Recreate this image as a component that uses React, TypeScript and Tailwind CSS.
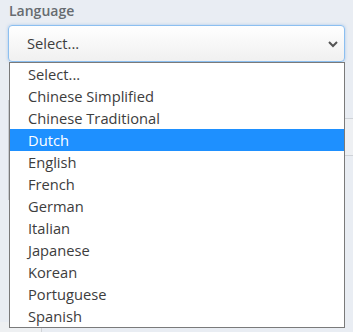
import React from "react";

const items = [
  "Select...",
  "Chinese Simplified",
  "Chinese Traditional",
  "Dutch",
  "English",
  "French",
  "German",
  "Italian",
  "Japanese",
  "Korean",
  "Portuguese",
  "Spanish",
];

export default function App() {
  return (
    <div className="relative w-[353px] h-[332px] overflow-hidden bg-[#e9edf3] font-['Open_Sans',sans-serif]">
      <div className="px-[9px] pt-[1px] text-[14px] font-semibold text-[#666b70] leading-[20px]">Language</div>
      <div className="mx-[8px] mt-[4px] h-[37px] rounded-[4px] border border-[#8cbff0] shadow-[0_0_3px_rgba(100,160,230,0.5)] bg-gradient-to-b from-white to-[#f0f0f0] flex items-center justify-between pl-[18px] pr-[5px]">
        <span className="text-[14.7px] text-[#3d3d3d]">Select...</span>
        <svg width="12" height="8" viewBox="0 0 12 8">
          <path d="M2 2 L6 6 L10 2" stroke="#555" strokeWidth="2" fill="none" />
        </svg>
      </div>
      {/* background hints */}
      <div className="absolute right-0 top-[118px] w-[10px] h-[38px] border-y border-[#cfd3d8] bg-[#eef0f3]" />
      <div className="absolute left-[8px] top-[100px] w-[1px] h-[100px] bg-[#c9ccd0]" />
      <div className="absolute left-0 bottom-0 w-[42px] h-[10px] border-r border-[#d0d3d7] bg-[#eef0f2]" />
      <div className="absolute left-[9px] top-[62px] w-[336px] border border-[#7a7a7a] bg-white z-10">
        {items.map((it) => (
          <div
            key={it}
            className={
              "h-[22px] pl-[18px] text-[14.7px] leading-[22px] " +
              (it === "Dutch" ? "bg-[#1e90ff] text-white" : "text-[#3d3d3d]")
            }
          >
            {it}
          </div>
        ))}
      </div>
    </div>
  );
}
